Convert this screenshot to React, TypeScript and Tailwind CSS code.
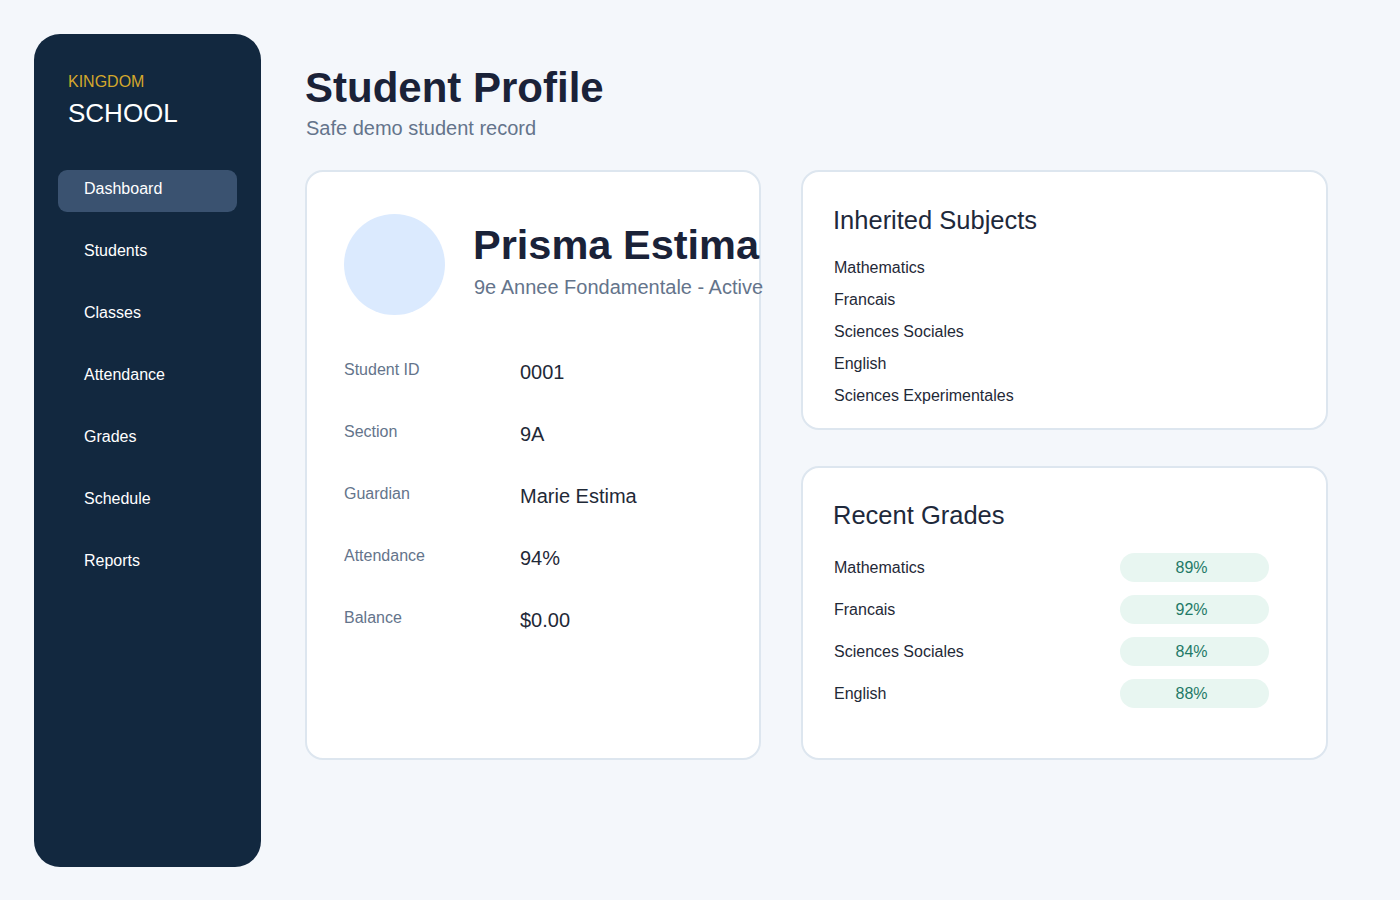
import React from "react";

const nav = ["Dashboard", "Students", "Classes", "Attendance", "Grades", "Schedule", "Reports"];
const rows = [
  ["Student ID", "0001"],
  ["Section", "9A"],
  ["Guardian", "Marie Estima"],
  ["Attendance", "94%"],
  ["Balance", "$0.00"],
];
const subjects = ["Mathematics", "Francais", "Sciences Sociales", "English", "Sciences Experimentales"];
const grades = [
  ["Mathematics", "89%"],
  ["Francais", "92%"],
  ["Sciences Sociales", "84%"],
  ["English", "88%"],
];

export default function App() {
  return (
    <div
      className="w-[1400px] h-[900px] bg-[#f4f7fb] flex p-[34px] overflow-hidden"
      style={{ fontFamily: '"Liberation Sans", Arial, sans-serif' }}
    >
      <aside className="w-[227px] h-[833px] shrink-0 rounded-[26px] bg-[#12283f] pt-[38px] px-[24px]">
        <div className="pl-[10px]">
          <div className="text-[16px] leading-[20px] text-[#d4a72c]">KINGDOM</div>
          <div className="text-[26px] leading-[30px] text-white mt-[6px]">SCHOOL</div>
        </div>
        <nav className="mt-[42px] flex flex-col gap-[20px]">
          {nav.map((n, i) => (
            <div
              key={n}
              className={`h-[42px] flex items-center pl-[26px] pb-[5px] rounded-[9px] text-[16px] text-white ${
                i === 0 ? "bg-[#3a5270]" : ""
              }`}
            >
              {n}
            </div>
          ))}
        </nav>
      </aside>

      <main className="ml-[44px] flex-1">
        <h1 className="text-[42px] leading-[46px] font-bold text-[#1a2238] mt-[31px]">Student Profile</h1>
        <div className="text-[20px] leading-[24px] text-[#64748b] mt-[5px] ml-[1px]">Safe demo student record</div>

        <div className="flex gap-[40px] mt-[30px]">
          <section className="w-[456px] h-[590px] shrink-0 bg-white border-2 border-[#dde6ef] rounded-[18px] pl-[37px] pt-[42px]">
            <div className="flex items-start">
              <div className="w-[101px] h-[101px] rounded-full bg-[#dbeafe] shrink-0" />
              <div className="ml-[28px] mt-[8px] whitespace-nowrap">
                <div className="text-[41.5px] leading-[46px] font-bold text-[#1a2238]">Prisma Estima</div>
                <div className="text-[20px] leading-[24px] text-[#64748b] mt-[7px] ml-[1px]">
                  9e Annee Fondamentale - Active
                </div>
              </div>
            </div>
            <div className="mt-[24px] flex flex-col">
              {rows.map(([l, v]) => (
                <div key={l} className="h-[62px] flex items-center">
                  <div className="w-[176px] text-[16px] text-[#64748b]">{l}</div>
                  <div className="text-[20px] text-[#1f2937] mt-[4px]">{v}</div>
                </div>
              ))}
            </div>
          </section>

          <div className="w-[527px] flex flex-col gap-[36px]">
            <section className="h-[260px] bg-white border-2 border-[#dde6ef] rounded-[18px] pl-[30px] pt-[32px]">
              <div className="text-[25.5px] leading-[32px] text-[#1e293b]">Inherited Subjects</div>
              <div className="mt-[16px] flex flex-col">
                {subjects.map((s) => (
                  <div key={s} className="h-[32px] flex items-center pl-[1px] text-[16px] text-[#1f2937]">
                    {s}
                  </div>
                ))}
              </div>
            </section>

            <section className="h-[294px] bg-white border-2 border-[#dde6ef] rounded-[18px] pl-[30px] pr-[57px] pt-[31px]">
              <div className="text-[25.5px] leading-[32px] text-[#1e293b]">Recent Grades</div>
              <div className="mt-[22px] flex flex-col gap-[13px]">
                {grades.map(([s, g]) => (
                  <div key={s} className="h-[29px] flex items-center justify-between">
                    <div className="pl-[1px] text-[16px] text-[#1f2937]">{s}</div>
                    <div className="w-[149px] h-[29px] rounded-full bg-[#e8f6f1] flex items-center justify-center pr-[6px] text-[16px] text-[#1f7a67]">
                      {g}
                    </div>
                  </div>
                ))}
              </div>
            </section>
          </div>
        </div>
      </main>
    </div>
  );
}
